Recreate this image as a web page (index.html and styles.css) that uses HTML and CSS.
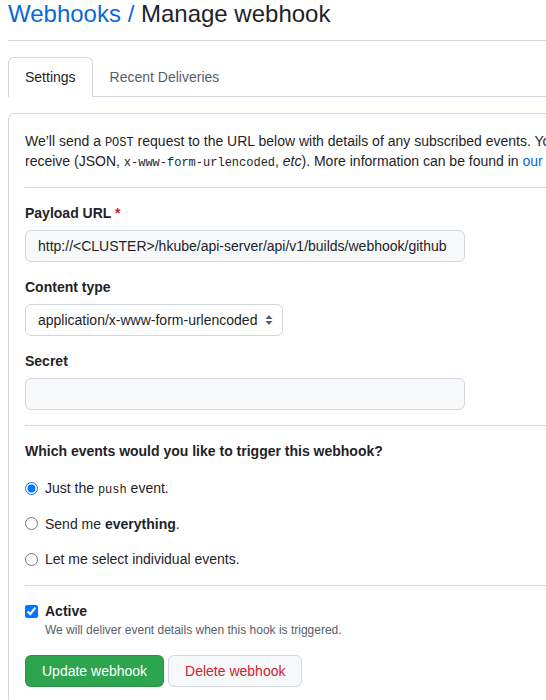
FILE: index.html
```html
<!DOCTYPE html>
<html lang="en">
<head>
<meta charset="utf-8">
<title>Manage webhook</title>
<link rel="stylesheet" href="styles.css">
</head>
<body>
<div class="page">
  <div class="subhead">
    <h2 class="subhead-heading"><a href="#" class="crumb">Webhooks /</a> Manage webhook</h2>
  </div>

  <nav class="tabnav">
    <a href="#" class="tab tab-selected">Settings</a>
    <a href="#" class="tab">Recent Deliveries</a>
  </nav>

  <form class="box">
    <p class="intro">We’ll send a <code>POST</code> request to the URL below with details of any subscribed events. You can also specify which data format you’d like to receive (JSON, <code>x-www-form-urlencoded</code>, <em>etc</em>). More information can be found in <a href="#">our developer documentation</a>.</p>

    <div class="divider"></div>

    <div class="form-group">
      <label class="field-label">Payload URL <span class="required">*</span></label>
      <input class="text-input" type="text" value="http://&lt;CLUSTER&gt;/hkube/api-server/api/v1/builds/webhook/github">
    </div>

    <div class="form-group">
      <label class="field-label">Content type</label>
      <select class="select">
        <option>application/x-www-form-urlencoded</option>
        <option>application/json</option>
      </select>
    </div>

    <div class="form-group">
      <label class="field-label">Secret</label>
      <input class="text-input" type="text" value="">
    </div>

    <div class="divider"></div>

    <h4 class="question">Which events would you like to trigger this webhook?</h4>

    <div class="choices">
      <label class="choice"><input type="radio" name="ev" checked> <span>Just the <code>push</code> event.</span></label>
      <label class="choice"><input type="radio" name="ev"> <span>Send me <strong>everything</strong>.</span></label>
      <label class="choice"><input type="radio" name="ev"> <span>Let me select individual events.</span></label>
    </div>

    <div class="divider"></div>

    <div class="active-group">
      <label class="choice active-label"><input type="checkbox" checked> <span>Active</span></label>
      <p class="note">We will deliver event details when this hook is triggered.</p>
    </div>

    <div class="actions">
      <button type="button" class="btn btn-primary">Update webhook</button>
      <button type="button" class="btn btn-danger">Delete webhook</button>
    </div>
  </form>
</div>
</body>
</html>
```

FILE: styles.css
```css
html, body {
  overflow: hidden;
}

body {
  margin: 0 0 0 8px;
  font-family: "Liberation Sans", Arial, sans-serif;
  font-size: 14px;
  line-height: 20px;
  color: #1f2328;
  background: #ffffff;
}

.page {
  width: 900px;
}

a {
  color: #0969da;
  text-decoration: none;
}

code {
  font-family: "Liberation Mono", monospace;
  font-size: 12px;
  line-height: 1;
}

.subhead {
  padding-bottom: 12px;
  border-bottom: 1px solid #d0d7de;
}

.subhead-heading {
  margin: 0;
  font-size: 24px;
  line-height: 28px;
  font-weight: 400;
  color: #1f2328;
}

.tabnav {
  margin-top: 16px;
  margin-bottom: 16px;
  display: flex;
  border-bottom: 1px solid #d0d7de;
}

.tab {
  padding: 8px 16px;
  line-height: 23px;
  color: #57606a;
  border: 1px solid transparent;
  border-bottom: 0;
  border-radius: 6px 6px 0 0;
  margin-bottom: -1px;
}

.tab-selected {
  color: #1f2328;
  border-color: #d0d7de;
  background: #ffffff;
}

.box {
  display: block;
  border: 1px solid #d0d7de;
  border-radius: 6px;
  padding: 17px 16px 16px;
  margin: 0;
}

.intro {
  margin: 0 0 16px;
  width: 862px;
}

.divider {
  border-top: 1px solid #d0d7de;
  margin-bottom: 15px;
}

.form-group {
  margin-bottom: 15px;
}

.form-group:last-of-type {
  margin-bottom: 16px;
}

.field-label {
  display: block;
  font-weight: 700;
  margin-bottom: 7px;
}

.required {
  color: #cf222e;
}

.text-input {
  display: block;
  box-sizing: border-box;
  width: 440px;
  height: 32px;
  padding: 5px 12px;
  font-family: "Liberation Sans", Arial, sans-serif;
  font-size: 14px;
  color: #1f2328;
  background: #f6f8fa;
  border: 1px solid #d0d7de;
  border-radius: 6px;
  outline: none;
}

.select {
  display: block;
  box-sizing: border-box;
  width: 258px;
  height: 32px;
  padding: 5px 24px 5px 12px;
  font-family: "Liberation Sans", Arial, sans-serif;
  font-size: 14px;
  color: #1f2328;
  background-color: #ffffff;
  background-image: url("data:image/svg+xml,%3Csvg xmlns='http://www.w3.org/2000/svg' width='16' height='16' viewBox='0 0 16 16'%3E%3Cpath fill='%23586069' d='M4.5 7 8 3l3.5 4zM4.5 9 8 13l3.5-4z'/%3E%3C/svg%3E");
  background-repeat: no-repeat;
  background-position: right 5px center;
  background-size: 16px 16px;
  border: 1px solid #d0d7de;
  border-radius: 6px;
  appearance: none;
  -webkit-appearance: none;
  outline: none;
}

.question {
  margin: 0 0 17px;
  font-size: 14px;
  line-height: 20px;
  font-weight: 700;
}

.choices {
  display: flex;
  flex-direction: column;
  gap: 15.5px;
  margin-bottom: 16px;
}

.choice {
  display: flex;
  align-items: center;
  gap: 7px;
  line-height: 20px;
}

.choice input {
  margin: 0;
  width: 13px;
  height: 13px;
}

.choice strong {
  font-weight: 700;
}

.active-label {
  font-weight: 700;
}

.note {
  margin: 0 0 16px 20px;
  font-size: 12px;
  line-height: 18px;
  color: #57606a;
}

.actions {
  display: flex;
  gap: 4px;
}

.btn {
  box-sizing: border-box;
  height: 32px;
  padding: 5px 16px;
  font-family: "Liberation Sans", Arial, sans-serif;
  font-size: 14px;
  line-height: 20px;
  border-radius: 6px;
  border: 1px solid rgba(31, 35, 40, 0.15);
  cursor: pointer;
}

.btn-primary {
  color: #ffffff;
  background: #2da44e;
}

.btn-danger {
  color: #cf222e;
  background: #f6f8fa;
  border-color: #d0d7de;
}
```
